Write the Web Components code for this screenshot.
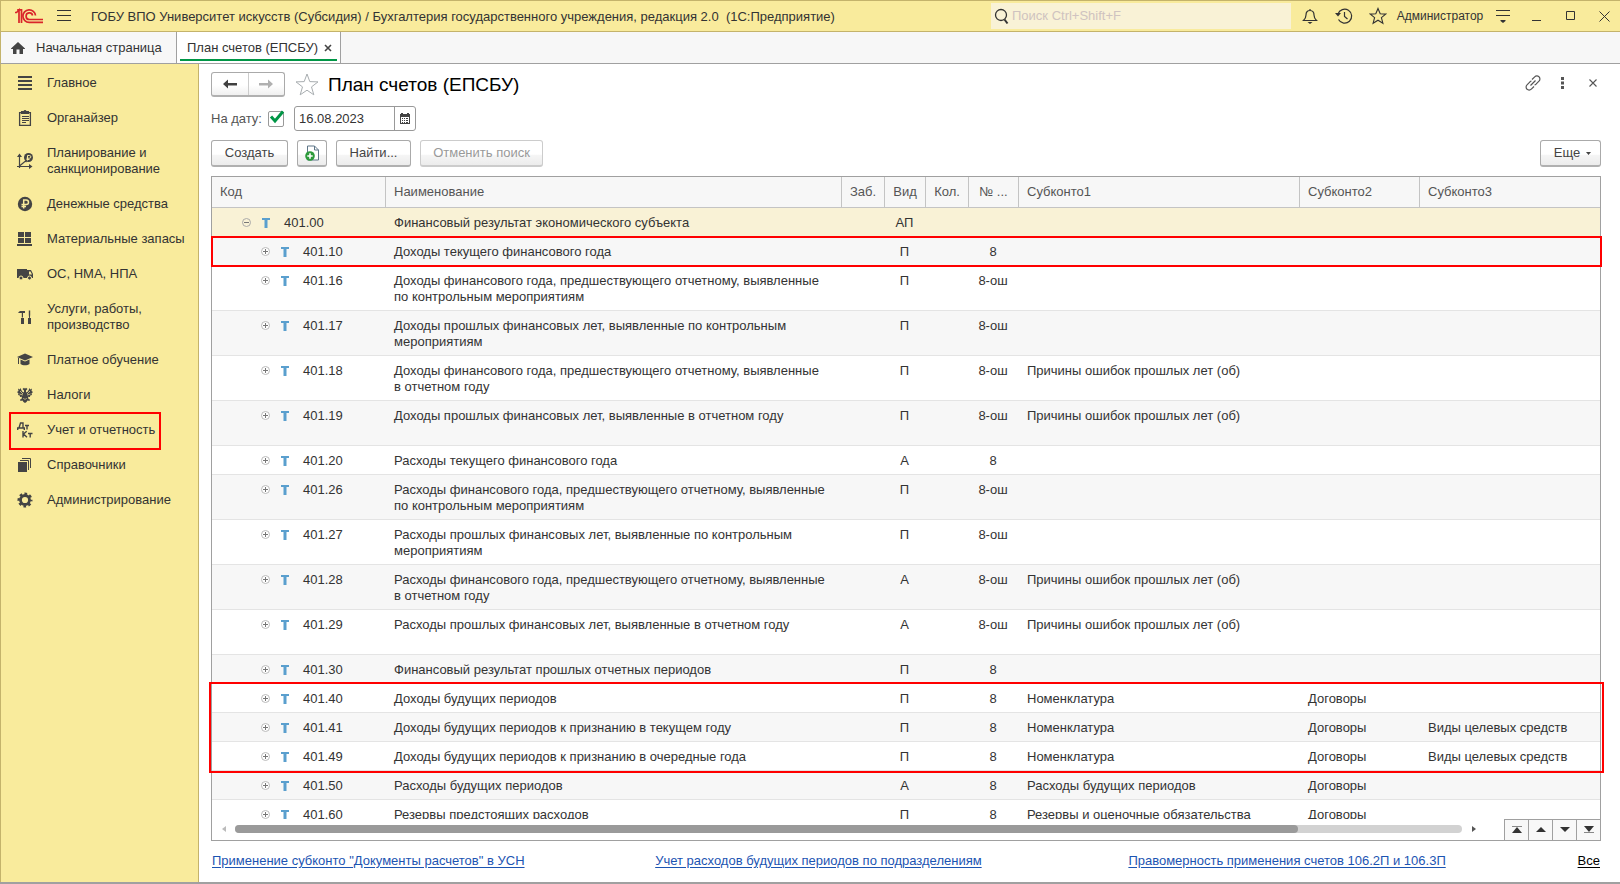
<!DOCTYPE html>
<html lang="ru">
<head>
<meta charset="utf-8">
<title>План счетов (ЕПСБУ)</title>
<style>
  html, body { margin: 0; height: 100%; }
  body {
    font: 13px/16px "Liberation Sans", Arial, sans-serif;
    color: #333;
    background: #fff;
    overflow: hidden;
    --yellow: #f9eb9c;
    --khaki: #c4b36b;
    --line: #a0a0a0;
    --mark: #f00;
  }
</style>
</head>
<body>
<app-window></app-window>

<script>
const ICONS = {
  logo: [30, 16, `<g fill="none" stroke="#d9252a" stroke-width="1.700"><path d="M1 4.500h1.500L5 2v13M3.200 1.800h4.300V15"/><path d="M21.500 7.500a6.300 6.300 0 1 0-6.300 6.900H29"/><path d="M18.600 7.500a3.300 3.300 0 1 0-3.300 4H29"/></g>`],
  burger: [14, 12, `<path stroke="#333" fill="none" d="M0 .5h14M0 5.500h14M0 10.500h14"/>`],
  search: [16, 17, `<g fill="none" stroke="#333"><circle cx="7" cy="7" r="5.500" stroke-width="1.300"/><path stroke-width="2" d="M10.500 11.500l3 4"/></g>`],
  bell: [16, 18, `<path fill="none" stroke="#333" stroke-width="1.200" d="M8 2v1.500M8 3.500c-3 0-4 2-4 4.500 0 3-1 4-2.500 5.500h13C13 12 12 11 12 8c0-2.500-1-4.500-4-4.500z"/><path fill="#333" d="M5.500 15h5L8 17z"/>`],
  history: [18, 18, `<g fill="none" stroke="#333" stroke-width="1.200"><path d="M3 7a7 7 0 1 1 .5 5.500"/><path d="M9.500 5v4.500l3 2.500"/></g><path fill="#333" d="M0 6h6L3 9.500z"/>`],
  star: [18, 18, `<path fill="none" stroke="#333" stroke-width="1.100" d="M9 1.500l2.200 5.300 5.500.3-4.300 3.500 1.500 5.600L9 13.200l-4.900 3 1.500-5.600L1.300 7.100l5.500-.3z"/>`],
  bigstar: [24, 23, `<path fill="#fff" stroke="#a8adb0" d="M12 1l2.800 7.600 8.200.3-6.500 5 2.300 7.900-6.800-4.600-6.800 4.600 2.300-7.900L1 8.900l8.200-.3z"/>`],
  funnel: [14, 14, `<path stroke="#333" d="M0 1.500h14M0 6.500h14"/><path fill="#333" d="M4.500 11h5v1L7 14l-2.500-2z"/>`],
  min: [10, 12, `<path stroke="#333" d="M0 10.500h9"/>`],
  max: [10, 10, `<path fill="none" stroke="#333" d="M.5.500h8v8h-8z"/>`],
  close: [11, 11, `<path fill="none" stroke="#333" d="M.5.500l10 10M10.500.500l-10 10"/>`],
  home: [14, 12, `<path fill="#444" d="M7 0l7 6.500V7h-2v5H8.500V7.500h-3V12H2V7H0v-.5z"/>`],
  tabx: [8, 8, `<path stroke="#444" stroke-width="1.600" d="M1 1l6 6M7 1L1 7"/>`],
  smallx: [8, 8, `<path stroke="#555" stroke-width="1.100" d="M.5.500l7 7M7.500.500l-7 7"/>`],
  back: [14, 10, `<path fill="#404040" d="M0 5l5-4.500V4h9v2.500H5v3z"/>`],
  fwd: [14, 10, `<path fill="#b0b0b0" d="M14 5L9 .5V4H0v2.500h9v3z"/>`],
  link: [16, 16, `<g fill="none" stroke="#555" stroke-width="1.200"><path d="M7 4.500l2.700-2.700a3 3 0 0 1 4.300 0 3 3 0 0 1 0 4.300L11 9.200a3 3 0 0 1-1.500.8"/><path d="M9 11.500l-2.700 2.700a3 3 0 0 1-4.300 0 3 3 0 0 1 0-4.300L5 6.800a3 3 0 0 1 1.500-.8M5.500 10.500l5-5"/></g>`],
  dots: [4, 12, `<path fill="#555" d="M0 0h3v3H0zM0 4.500h3v3H0zM0 9h3v3H0z"/>`],
  check: [16, 15, `<path fill="none" stroke="#009646" stroke-width="3" d="M2 6.500l4 4.500 8-9.500"/>`],
  cal: [10, 11, `<path fill="#444" d="M0 1h1V0h2v1h4V0h2v1h1v10H0z"/><path fill="#fff" d="M1 4h8v6H1z"/><path fill="#444" d="M2 5h1v1H2zM4 5h1v1H4zM6 5h2v1H6zM2 7h1v1H2zM4 7h1v1H4zM6 7h2v1H6zM2 9h1v1H2zM4 9h1v1H4zM6 9h2v1H6z"/>`],
  copy: [14, 17, `<path fill="#fff" stroke="#5d7587" d="M2.500 1h7l4 4v10h-11z"/><path fill="none" stroke="#5d7587" d="M9.500 1v4h4"/><circle cx="5" cy="11" r="4.800" fill="#2c9a3b"/><path stroke="#fff" stroke-width="1.600" d="M2.300 11h5.400M5 8.300v5.400"/>`],
  caret: [5, 3, `<path fill="#444" d="M0 0h5L2.500 3z"/>`],
  main: [16, 16, `<path stroke="#444" stroke-width="2" d="M1 2h14M1 6h14M1 10h14M1 14h14"/>`],
  organizer: [16, 16, `<path fill="none" stroke="#444" stroke-width="1.300" d="M2.600 2.600h10.800v12.800H2.600z"/><path fill="#444" d="M4 1h2.500l1-1h1l1 1H12v3H4z"/><path stroke="#444" d="M5 6.500h7M5 8.500h7M5 10.500h7M5 12.500h4"/>`],
  planning: [16, 16, `<path fill="none" stroke="#444" stroke-width="1.200" d="M2.500 2v13M0 13.500h14M2.500 13l6-5 1 1"/><path fill="#444" d="M0 4l2.500-3.500L5 4zM12 11l3.500 2.500L12 16z"/><circle cx="11.500" cy="4.500" r="4.500" fill="#444"/><path fill="none" stroke="#f9eb9c" d="M10.500 7.500v-5h2a1.200 1.200 0 0 1 0 2.700h-3M9.500 6.500h3"/>`],
  ruble: [16, 16, `<circle cx="8" cy="8" r="7.200" fill="#444"/><path fill="none" stroke="#f9eb9c" stroke-width="1.500" d="M6.700 12.500V4h2.500a2.300 2.300 0 0 1 0 4.600H4.500M4.500 10.500H9"/>`],
  stock: [16, 16, `<path fill="#444" d="M1 1h6v5H1zM8 1h6v5H8zM1 7h6v5H1zM8 7h6v5H8zM0 13h15v2H0z"/>`],
  truck: [16, 16, `<path fill="#444" d="M0 3h10v9H0zM10 4h4l2 4v4h-6z"/><path fill="#f9eb9c" d="M12 5.500h1.500L15 8.500h-3z"/><g fill="#444" stroke="#f9eb9c"><circle cx="4" cy="12" r="2"/><circle cx="12.500" cy="12" r="2"/></g>`],
  tools: [16, 16, `<path fill="#444" d="M1 3.500L3 2h5v2H6v4.500H4.800V4H2zM4 9h3v6H4zM11.800 1.500h1.400V6l-.3 3h-.8l-.3-3zM11 9h3v6h-3z"/>`],
  edu: [16, 16, `<path fill="#444" d="M0 5l8-3.500L16 5 8 8.500zM3.500 7.500L8 9.500l4.500-2V12c-2 1.700-7 1.700-9 0zM1 6h1v6H1z"/>`],
  eagle: [16, 16, `<path fill="#444" d="M7 3.500L5.500 2 7 .800l1 1 1-1L10.500 2 9 3.500v2l2-1L12.500 1l.8 1.500L15 1.500l-.5 2.500L16 5l-1.500 1.500L15 8l-1.800.5-.2 1.500-2-.3.5 2.300 1.500.5-.5 1.500-2-.5L9.500 15 8 16l-1.500-1-1-1.500-2 .5-.5-1.500 1.500-.5.5-2.300-2 .3-.2-1.500L1 8l.5-1.500L0 5l1.500-1L1 1.500l1.700 1L3.500 1 5 4.500l2 1z"/><path stroke="#f9eb9c" stroke-width=".7" d="M3 4l3 3M13 4l-3 3M2.500 7L6 8M13.500 7L10 8M6.500 11l1 1.500M9.500 11l-1 1.500"/>`],
  dtkt: [16, 16, `<g fill="none" stroke="#444" stroke-width="1.400"><path d="M2 6l1.500-5H6v5M.7 8V6h6.600v2M8 3.500h4M10 3.500v4M6 9v6.500M9.700 9.200L6.500 12l3.500 3.300M11 11.500h4.500M13.200 11.500v4"/></g>`],
  books: [16, 16, `<path fill="#444" d="M1 5h9v10H1z"/><path fill="none" stroke="#444" d="M3 3.500h8.500V13M5 1.500h8.500V11"/>`],
  gear: [16, 16, `<circle cx="8" cy="8" r="4.500" fill="none" stroke="#444" stroke-width="2.800"/><circle cx="8" cy="8" r="6.300" fill="none" stroke="#444" stroke-width="2.400" stroke-dasharray="2.600 2.348" stroke-dashoffset="1.300"/>`],
  plus: [9, 9, `<circle cx="4.500" cy="4.500" r="4" fill="#fff" stroke="#bbb"/><path stroke="#777" d="M2 4.500h5M4.500 2v5"/>`],
  minus: [9, 9, `<circle cx="4.500" cy="4.500" r="4" fill="none" stroke="#aaa"/><path stroke="#777" d="M2 4.500h5"/>`],
  account: [8, 10, `<path fill="#5a9fce" d="M0 0h8v2H5.500v8h-3V2H0z"/>`],
  left: [4, 6, `<path fill="#bbb" d="M4 0v6L0 3z"/>`],
  right: [4, 6, `<path fill="#555" d="M0 0v6l4-3z"/>`],
  top: [10, 8, `<path fill="#888" d="M0 0h10v1H0z"/><path fill="#333" d="M5 1l5 6H0z"/>`],
  up: [10, 6, `<path fill="#333" d="M5 0l5 5H0z"/>`],
  down: [10, 6, `<path fill="#333" d="M0 0h10L5 5z"/>`],
  bottom: [10, 8, `<path fill="#888" d="M0 6h10v1H0z"/><path fill="#333" d="M0 0h10L5 6z"/>`]
};

function define(name, css, html) {
  customElements.define(name, class extends HTMLElement {
    connectedCallback() {
      if (this.shadowRoot) return;
      const root = this.attachShadow({ mode: "open" });
      const markup = typeof html === "function" ? html(this) : html;
      root.innerHTML = `<style>*{box-sizing:border-box}${css}</style>${markup}`;
    }
  });
}

define("ui-icon", `:host{display:inline-flex;flex:none}svg{display:block}`, el => {
  const [w, h, body] = ICONS[el.getAttribute("name")];
  return `<svg width="${w}" height="${h}" viewBox="0 0 ${w} ${h}" aria-hidden="true">${body}</svg>`;
});

define("icon-button", `
  :host{display:inline-flex}
  button{display:flex;align-items:center;justify-content:center;width:100%;height:100%;padding:0;border:0;background:none;cursor:pointer}`,
  el => `<button aria-label="${el.getAttribute("label")}"><ui-icon name="${el.getAttribute("icon")}"></ui-icon></button>`);

define("push-button", `
  :host{display:inline-flex;height:27px}
  button{display:flex;align-items:center;justify-content:center;gap:6px;width:100%;padding:0;font:inherit;color:#444;
    border:1px solid #aaa;border-bottom:2px solid #b0b0b0;border-radius:3px;
    background:linear-gradient(#fff 0 55%,#f5f5f5 60%,#ececec)}
  button:disabled{color:#999;border-color:#ccc}`,
  el => `<button ${el.hasAttribute("disabled") ? "disabled" : ""} ${el.hasAttribute("label") ? `aria-label="${el.getAttribute("label")}"` : ""}><slot></slot></button>`);

define("title-bar", `
  :host{display:flex;align-items:center;height:32px;background:var(--yellow);border:1px solid var(--khaki);border-width:1px 0 1px 1px;box-sizing:border-box;padding-left:13px}
  h1{margin:0 0 0 20px;padding-top:1px;font:inherit;white-space:pre;flex:1}
  .burger{margin-left:13px}
  label{display:flex;align-items:center;width:300px;height:26px;background:#f9f2d6;margin-right:2px;padding-left:3px;gap:2px}
  input{border:0;background:none;outline:0;font:inherit;color:#333;padding:0;flex:1;min-width:0}
  input::placeholder{color:#cfc3c0;opacity:1}
  icon-button{width:34px;height:30px}
  .funnel{width:35px}
  .close{width:32px}
  .user{font:12px/16px "Liberation Sans",Arial,sans-serif;border:0;background:none;padding:0;color:#333;width:90px;white-space:nowrap}`,
  `<ui-icon name="logo"></ui-icon><ui-icon class="burger" name="burger"></ui-icon>
   <h1>ГОБУ ВПО Университет искусств (Субсидия) / Бухгалтерия государственного учреждения, редакция 2.0  (1С:Предприятие)</h1>
   <label><ui-icon name="search"></ui-icon><input type="text" aria-label="Поиск" placeholder="Поиск Ctrl+Shift+F"></label>
   <icon-button icon="bell" label="Оповещения"></icon-button><icon-button icon="history" label="История"></icon-button>
   <icon-button icon="star" label="Избранное"></icon-button><button class="user">Администратор</button>
   <icon-button class="funnel" icon="funnel" label="Сервис"></icon-button><icon-button icon="min" label="Свернуть"></icon-button>
   <icon-button icon="max" label="Развернуть"></icon-button><icon-button class="close" icon="close" label="Закрыть"></icon-button>`);

define("tab-strip", `
  :host{display:flex;height:32px;box-sizing:border-box;background:#f7f7f7;border-bottom:1px solid var(--line);border-left:1px solid var(--khaki)}
  a,.tab{display:flex;align-items:center;color:#333;text-decoration:none;white-space:nowrap}
  a{width:176px;padding-left:10px;gap:11px;border-right:1px solid var(--line)}
  .tab{width:164px;background:#fff;border-right:1px solid var(--line);padding:0 3px;position:relative}
  .tab a{flex:1;width:auto;padding:0 0 0 7px;border:0;height:100%}
  .tab::after{content:"";position:absolute;left:3px;right:3px;bottom:2px;height:2px;background:#009646}
  icon-button{width:18px;height:24px}`,
  `<a href="#home"><ui-icon name="home"></ui-icon>Начальная страница</a>
   <div class="tab"><a href="#plan">План счетов (ЕПСБУ)</a><icon-button icon="tabx" label="Закрыть вкладку"></icon-button></div>`);

define("nav-item", `
  :host{display:block}
  a{display:grid;grid-template-columns:16px 1fr;column-gap:14px;align-items:center;min-height:35px;padding:10px 8px 9px 16px;color:#333;text-decoration:none;position:relative}
  :host([marked]) a::after{content:"";position:absolute;left:8px;top:0;width:152px;height:38px;border:2px solid var(--mark);box-sizing:border-box}`,
  el => `<a href="#${el.getAttribute("icon")}"><ui-icon name="${el.getAttribute("icon")}"></ui-icon><span><slot></slot></span></a>`);

define("side-nav", `
  :host{display:block;width:199px;padding-top:1px;box-sizing:border-box;background:var(--yellow);border:1px solid var(--khaki);border-width:0 1px 0 1px}`,
  `<nav>
    <nav-item icon="main">Главное</nav-item><nav-item icon="organizer">Органайзер</nav-item>
    <nav-item icon="planning">Планирование и<br>санкционирование</nav-item><nav-item icon="ruble">Денежные средства</nav-item>
    <nav-item icon="stock">Материальные запасы</nav-item><nav-item icon="truck">ОС, НМА, НПА</nav-item>
    <nav-item icon="tools">Услуги, работы,<br>производство</nav-item><nav-item icon="edu">Платное обучение</nav-item>
    <nav-item icon="eagle">Налоги</nav-item><nav-item icon="dtkt" marked>Учет и отчетность</nav-item>
    <nav-item icon="books">Справочники</nav-item><nav-item icon="gear">Администрирование</nav-item>
  </nav>`);

define("page-header", `
  :host{display:flex;align-items:center;height:25px}
  .nav{display:flex;width:74px;height:25px;border:1px solid #aaa;border-bottom:2px solid #b0b0b0;border-radius:3px;box-sizing:border-box;background:linear-gradient(#fff 0 55%,#f0f0f0)}
  .nav icon-button{flex:1}
  .nav icon-button+icon-button{border-left:1px solid #ccc}
  h2{flex:1;margin:0 0 0 9px;font:19px/24px "Liberation Sans",Arial,sans-serif;color:#000}
  ui-icon{margin-left:10px}
  .r{width:30px;height:22px;align-self:flex-start}
  .r:last-child{margin-right:-7px}`,
  `<div class="nav"><icon-button icon="back" label="Назад"></icon-button><icon-button icon="fwd" label="Вперед"></icon-button></div>
   <ui-icon name="bigstar"></ui-icon><h2>План счетов (ЕПСБУ)</h2>
   <icon-button class="r" icon="link" label="Ссылка"></icon-button><icon-button class="r" icon="dots" label="Меню"></icon-button><icon-button class="r" icon="smallx" label="Закрыть"></icon-button>`);

define("date-filter", `
  :host{display:flex;align-items:center;height:25px;color:#555}
  .box{position:relative;display:flex;width:16px;height:16px;margin:0 10px 0 6px}
  .box input{appearance:none;margin:0;width:16px;height:16px;border:1px solid #999;border-radius:2px;background:#fff}
  .box ui-icon{position:absolute;left:1px;top:-1px;pointer-events:none;display:none}
  .box input:checked+ui-icon{display:flex}
  .date{display:flex;width:122px;height:25px;border:1px solid #999;border-radius:3px;background:#fff}
  .date input{border:0;outline:0;background:none;font:inherit;color:#333;width:100px;min-width:0;flex:1;padding:0 0 0 4px}
  .date icon-button{width:21px;border-left:1px solid #999}`,
  `<label for="on">На дату:</label><span class="box"><input id="on" type="checkbox" checked><ui-icon name="check"></ui-icon></span>
   <span class="date"><input type="text" aria-label="Дата" value="16.08.2023"><icon-button icon="cal" label="Выбрать дату"></icon-button></span>`);

define("command-bar", `
  :host{display:flex;gap:9px;height:27px}
  .create{width:77px}
  .copy{width:30px}
  .find{width:75px}
  .cancel{width:123px}
  .more{margin-left:auto;width:61px}
  .more span{padding-left:4px}`,
  `<push-button class="create">Создать</push-button>
   <push-button class="copy" label="Скопировать"><ui-icon name="copy"></ui-icon></push-button>
   <push-button class="find">Найти...</push-button>
   <push-button class="cancel" disabled>Отменить поиск</push-button>
   <push-button class="more"><span>Еще</span><ui-icon name="caret"></ui-icon></push-button>`);

const REASON = "Причины ошибок прошлых лет (об)";
const ROWS = [
  ["401.00", "Финансовый результат экономического субъекта", "АП", "", "", "", ""],
  ["401.10", "Доходы текущего финансового года", "П", "8", "", "", ""],
  ["401.16", "Доходы финансового года, предшествующего отчетному, выявленные<br>по контрольным мероприятиям", "П", "8-ош", "", "", ""],
  ["401.17", "Доходы прошлых финансовых лет, выявленные по контрольным<br>мероприятиям", "П", "8-ош", "", "", ""],
  ["401.18", "Доходы финансового года, предшествующего отчетному, выявленные<br>в отчетном году", "П", "8-ош", REASON, "", ""],
  ["401.19", "Доходы прошлых финансовых лет, выявленные в отчетном году", "П", "8-ош", REASON, "", "", "tall"],
  ["401.20", "Расходы текущего финансового года", "А", "8", "", "", ""],
  ["401.26", "Расходы финансового года, предшествующего отчетному, выявленные<br>по контрольным мероприятиям", "П", "8-ош", "", "", ""],
  ["401.27", "Расходы прошлых финансовых лет, выявленные по контрольным<br>мероприятиям", "П", "8-ош", "", "", ""],
  ["401.28", "Расходы финансового года, предшествующего отчетному, выявленные<br>в отчетном году", "А", "8-ош", REASON, "", ""],
  ["401.29", "Расходы прошлых финансовых лет, выявленные в отчетном году", "А", "8-ош", REASON, "", "", "tall"],
  ["401.30", "Финансовый результат прошлых отчетных периодов", "П", "8", "", "", ""],
  ["401.40", "Доходы будущих периодов", "П", "8", "Номенклатура", "Договоры", ""],
  ["401.41", "Доходы будущих периодов к признанию в текущем году", "П", "8", "Номенклатура", "Договоры", "Виды целевых средств"],
  ["401.49", "Доходы будущих периодов к признанию в очередные года", "П", "8", "Номенклатура", "Договоры", "Виды целевых средств"],
  ["401.50", "Расходы будущих периодов", "А", "8", "Расходы будущих периодов", "Договоры", ""],
  ["401.60", "Резервы предстоящих расходов", "П", "8", "Резервы и оценочные обязательства", "Договоры", ""]
];

define("accounts-table", `
  :host{display:block;overflow:hidden;min-height:0}
  table{width:100%;table-layout:fixed;border-collapse:separate;border-spacing:0}
  th{height:31px;padding:0 8px;font-weight:normal;text-align:left;color:#555;background:#f7f7f7;border-right:1px solid #c4c4c4;border-bottom:1px solid #c4c4c4;white-space:nowrap}
  th:last-child{border-right:0}
  td{height:29px;padding:7px 8px 5px;vertical-align:top;border-bottom:1px solid #e4e4e4;white-space:nowrap}
  th.c,td.c{text-align:center;padding-left:0;padding-right:0}
  td.c{padding-right:2px}
  tr.tall td{height:45px}
  tbody tr:nth-child(even) td{background:#f7f7f7}
  tbody tr:first-child td{background:#f9f2d6}
  .code{display:flex;align-items:center;padding-left:41px;height:16px}
  tr:first-child .code{padding-left:22px}
  .code ui-icon{margin-bottom:2px}
  .code ui-icon+ui-icon{margin:0 14px 1px 11px}`,
  () => `<table>
    <colgroup><col style="width:174px"><col style="width:456px"><col style="width:43px"><col style="width:41px"><col style="width:43px"><col style="width:50px"><col style="width:281px"><col style="width:120px"><col></colgroup>
    <thead><tr><th>Код</th><th>Наименование</th><th class="c">Заб.</th><th class="c">Вид</th><th class="c">Кол.</th><th class="c">№ ...</th><th>Субконто1</th><th>Субконто2</th><th>Субконто3</th></tr></thead>
    <tbody>${ROWS.map((r, i) => `<tr class="${r[7] || ""}"><td><div class="code"><ui-icon name="${i ? "plus" : "minus"}"></ui-icon><ui-icon name="account"></ui-icon>${r[0]}</div></td>
      <td>${r[1]}</td><td></td><td class="c">${r[2]}</td><td></td><td class="c">${r[3]}</td><td>${r[4]}</td><td>${r[5]}</td><td>${r[6]}</td></tr>`).join("")}</tbody>
  </table>`);

define("list-scroller", `
  :host{display:flex;height:21px;flex:none;background:#fff}
  .a{width:23px;height:14px;margin-top:3px}
  .track{flex:1;display:flex;height:8px;margin-top:6px;border-radius:4px;background:#d2d2d2}
  .thumb{flex:13;border-radius:4px;background:#9a9a9a}
  .rest{flex:2}
  .jump{display:flex;width:96px;margin-left:19px;border-top:1px solid var(--line);background:#f8f8f8}
  .jump icon-button{flex:1;border-left:1px solid var(--line);height:20px}`,
  `<icon-button class="a" icon="left" label="Влево"></icon-button><div class="track"><div class="thumb"></div><div class="rest"></div></div>
   <icon-button class="a" icon="right" label="Вправо"></icon-button>
   <div class="jump"><icon-button icon="top" label="В начало"></icon-button><icon-button icon="up" label="Вверх"></icon-button><icon-button icon="down" label="Вниз"></icon-button><icon-button icon="bottom" label="В конец"></icon-button></div>`);

define("accounts-list", `
  :host{display:flex;flex-direction:column;position:relative;min-height:0;border:1px solid var(--line);box-sizing:border-box}
  accounts-table{flex:1}
  .mark{position:absolute;border:2px solid var(--mark);pointer-events:none}
  .one{left:-1px;right:-2px;top:59px;height:31px}
  .three{left:-3px;right:-4px;top:505px;height:91px}`,
  `<accounts-table></accounts-table><list-scroller></list-scroller><div class="mark one"></div><div class="mark three"></div>`);

define("page-links", `
  :host{display:grid;grid-template-columns:443fr 473fr 449fr auto;height:41px;padding:0 1px 2px;box-sizing:border-box;align-items:center}
  a{color:#1c54b2;justify-self:start;white-space:nowrap;text-underline-offset:2px}
  .all{color:#000}`,
  `<a href="#usn">Применение субконто "Документы расчетов" в УСН</a><a href="#dept">Учет расходов будущих периодов по подразделениям</a>
   <a href="#106">Правомерность применения счетов 106.2П и 106.3П</a><a class="all" href="#all">Все</a>`);

define("accounts-page", `
  :host{display:flex;flex-direction:column;gap:9px;padding:8px 19px 0 12px;min-width:0;min-height:0;background:#fff}
  accounts-list{flex:1}
  page-links{margin-top:-9px}`,
  `<page-header></page-header><date-filter></date-filter><command-bar></command-bar><accounts-list></accounts-list><page-links></page-links>`);

define("app-window", `
  :host{display:flex;flex-direction:column;height:100vh;box-sizing:border-box;border-bottom:2px solid var(--line)}
  main{flex:1;display:flex;min-height:0}
  accounts-page{flex:1}`,
  `<title-bar></title-bar><tab-strip></tab-strip><main><side-nav></side-nav><accounts-page></accounts-page></main>`);
</script>
</body>
</html>
